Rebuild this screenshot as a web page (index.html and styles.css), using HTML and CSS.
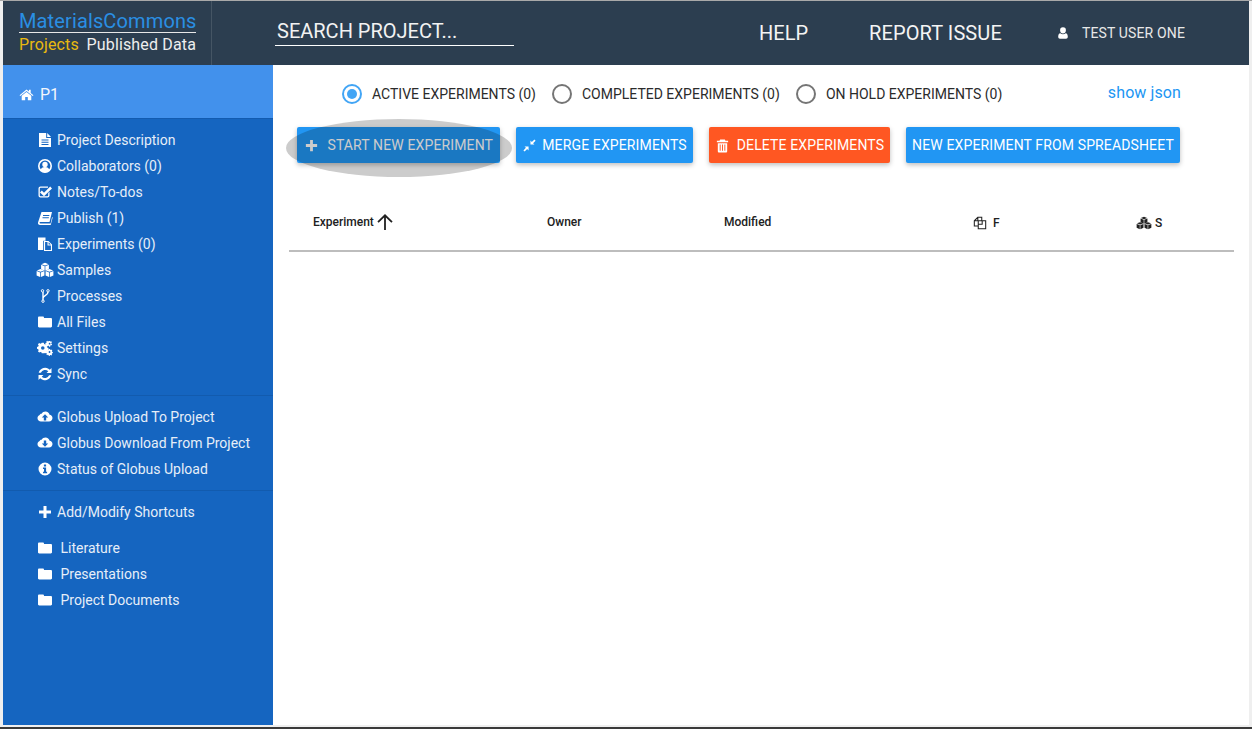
FILE: index.html
```html
<!DOCTYPE html>
<html lang="en">

<head>
  <meta charset="UTF-8">
  <title>Materials Commons</title>
  <link rel="stylesheet" href="styles.css">
</head>

<body>
  <svg class="defs" width="0" height="0">
    <symbol id="i-home" viewBox="0 0 16 16"><path d="M8 2.600 .6 8.700l.8 1L8 4.300l6.600 5.400.8-1-2.900-2.400V2.800h-1.900v1.900zM2.900 9.400V14h3.700v-3.300h2.800V14h3.700V9.400L8 5.200z"/></symbol>
    <symbol id="i-file" viewBox="0 0 16 16"><path fill-rule="evenodd" d="M2 1h7.200v5H14v9H2zM4.500 7.500v1h7v-1zM4.500 9.700v1h7v-1zM4.500 11.900v1h7v-1z"/><path d="M10.200 1 14 4.900h-3.800z"/></symbol>
    <symbol id="i-usercircle" viewBox="0 0 16 16"><path fill-rule="evenodd" d="M8 1a7 7 0 1 0 0 14A7 7 0 0 0 8 1zm0 1.600a5.400 5.400 0 1 1 0 10.800A5.400 5.400 0 0 1 8 2.600z"/><circle cx="8" cy="6.500" r="2.700"/><path d="M3.600 12c.5-2 2-3 4.400-3s3.900 1 4.400 3c-1 1.400-2.600 2.300-4.400 2.300S4.600 13.400 3.600 12z"/></symbol>
    <symbol id="i-check" viewBox="0 0 16 16"><path d="M3.500 2.500H11v1.300H3.500c-.4 0-.7.3-.7.7v7c0 .4.3.7.7.7h7c.4 0 .7-.3.7-.7V9l1.300-1.300v3.800c0 1.100-.9 2-2 2h-7c-1.100 0-2-.9-2-2v-7c0-1.100.9-2 2-2z"/><path d="M4.800 6.600 7 8.800 13.200 2.600 15 4.400 7 12.200 3 8.400z"/></symbol>
    <symbol id="i-book" viewBox="0 0 16 16"><path fill-rule="evenodd" d="M4.500 2H15l-2.500 10H3.300c-.5 0-.8.3-.8.700s.4.800.9.800h10.200l1.500-6.500.6.400L13.700 15H3c-1.400 0-2.300-1.200-2-2.500zM6 5v1h6.200l.3-1zM5.500 7.300v1h6.200l.3-1z"/></symbol>
    <symbol id="i-files" viewBox="0 0 16 16"><path d="M1 1.500h7.500v3.200H6.200V14H1z"/><path fill-rule="evenodd" d="M7 5h4.500L15 8.500V15H7zm1.100 1v8h5.800V9.500h-3.400V6zm3.500.3v2.200h2.200z"/></symbol>
    <symbol id="i-cubes" viewBox="0 0 18 16">
      <polygon points="9,.8 12.600,2.200 9,3.600 5.400,2.200"/><polygon points="5.100,2.800 8.650,4.200 8.650,8.800 5.100,7.200"/><polygon points="12.900,2.800 9.350,4.200 9.350,8.800 12.900,7.200"/>
      <polygon points="4.500,7 8.100,8.400 4.500,9.800 .9,8.400"/><polygon points=".6,9 4.150,10.400 4.150,15 .6,13.400"/><polygon points="8.400,9 4.850,10.400 4.850,15 8.400,13.400"/>
      <polygon points="13.500,7 17.100,8.400 13.500,9.800 9.900,8.400"/><polygon points="9.600,9 13.150,10.400 13.150,15 9.600,13.400"/><polygon points="17.400,9 13.850,10.400 13.850,15 17.400,13.400"/>
    </symbol>
    <symbol id="i-fork" viewBox="0 0 16 16"><path fill="none" stroke="currentColor" stroke-width="1.400" d="M6 4v8M11 4c0 3.600-5 3-5 6.500"/><circle cx="5.500" cy="2.800" r="1.200" fill="none" stroke="currentColor"/><circle cx="11" cy="2.800" r="1.200" fill="none" stroke="currentColor"/><circle cx="6" cy="13.200" r="1.200" fill="none" stroke="currentColor"/></symbol>
    <symbol id="i-folder" viewBox="0 0 16 16"><path d="M2.200 2.500h3.600c.7 0 1.200.5 1.200 1.200v.3h6.800c.7 0 1.200.5 1.200 1.200v7.100c0 .7-.5 1.200-1.200 1.200H2.200C1.500 13.500 1 13 1 12.300V3.700c0-.7.500-1.200 1.200-1.200z"/></symbol>
    <symbol id="i-cogs" viewBox="0 0 18 16"><path fill-rule="evenodd" d="M5.300 4h2.400l.3 1.500 1.200.6 1.300-.8 1.500 1.700-.9 1.200.3 1.300 1.500.4v2.100l-1.500.4-.3 1.200.9 1.200-1.500 1.500-1.300-.8-1.200.5L7.700 16H5.300L5 14.900l-1.200-.5-1.300.8L1 13.700l.9-1.200-.5-1.200L0 10.900V8.800l1.400-.4.500-1.300L1 5.900 2.500 4.400l1.300.8L5 4.700zM6.500 8a2 2 0 1 0 0 4 2 2 0 0 0 0-4z" transform="translate(0 -2)"/><path fill-rule="evenodd" d="M13.500 0h1.400l.2.900 1-.4.700 1.100-.7.700v1l.9.500-.5 1.200-1-.2-.7.700.1 1h-1.300l-.3-1-1-.1-.6.800-1.100-.7.400-.9-.5-.8-1-.1V2.400l1-.2.400-.8-.4-.9 1.100-.7.700.8zm.7 2.200a1 1 0 1 0 0 2 1 1 0 0 0 0-2z"/><path fill-rule="evenodd" d="M13.500 9h1.200l.2.900.9.300.7-.5.800 1-.6.700.2.900.9.300v1.200l-.9.200-.3.900.5.700-1 .7-.7-.5-.8.200-.3.900h-1l-.3-.9-.9-.3-.8.500-.7-1 .5-.7-.2-.9-.9-.2v-1.200l.9-.2.300-.9-.6-.7.800-.9.800.5.8-.3zm.6 2.500a1 1 0 1 0 0 2 1 1 0 0 0 0-2z"/></symbol>
    <symbol id="i-sync" viewBox="0 0 16 16"><path d="M14.500 2v5h-5l1.800-1.800A4.600 4.600 0 0 0 3.900 6.800H1.700A6.700 6.700 0 0 1 12.800 3.700z"/><path d="M1.500 14V9h5L4.700 10.800a4.600 4.600 0 0 0 7.400-1.600h2.200A6.700 6.700 0 0 1 3.200 12.300z"/></symbol>
    <symbol id="i-cloudup" viewBox="0 0 16 16"><path fill-rule="evenodd" d="M8.500 2.500c2 0 3.700 1.400 4.100 3.300 1.500.2 2.900 1.500 2.900 3.200 0 1.900-1.500 3.500-3.500 3.500H4c-2 0-3.500-1.500-3.500-3.300 0-1.400.9-2.600 2.200-3.100.1-.8 1-1.500 1.900-1.300.8-1.400 2.200-2.300 3.900-2.300zM8 5.200 4.800 8.400h2v3h2.400v-3h2z"/></symbol>
    <symbol id="i-clouddown" viewBox="0 0 16 16"><path fill-rule="evenodd" d="M8.500 2.500c2 0 3.700 1.400 4.100 3.300 1.500.2 2.900 1.500 2.900 3.200 0 1.900-1.500 3.500-3.500 3.500H4c-2 0-3.500-1.500-3.500-3.300 0-1.400.9-2.600 2.200-3.100.1-.8 1-1.500 1.900-1.300.8-1.400 2.200-2.300 3.900-2.300zM6.800 5.500v3h-2L8 11.700l3.200-3.200h-2v-3z"/></symbol>
    <symbol id="i-info" viewBox="0 0 16 16"><path fill-rule="evenodd" d="M8 1.500a6.500 6.500 0 1 0 0 13 6.500 6.500 0 0 0 0-13zM6.900 3.500h2.200v2H6.900zM6 6.500h3.100v4.300h1v1.400H6v-1.400h1V7.900H6z"/></symbol>
    <symbol id="i-plus" viewBox="0 0 16 16"><path d="M6.500 2h3v4.500H14v3H9.500V14h-3V9.500H2v-3h4.500z"/></symbol>
    <symbol id="i-compress" viewBox="0 0 16 16"><path d="M14.500 2.800 13.200 1.500 10.500 4.200 9 2.700V7h4.300l-1.500-1.500zM1.500 13.200l1.300 1.300 2.700-2.700L7 13.300V9H2.700l1.500 1.500z"/></symbol>
    <symbol id="i-trash" viewBox="0 0 16 16"><path fill-rule="evenodd" d="M5.500 1.500h5l.7 1.500H14v1.500H2V3h2.800zM3 5.500h10V14c0 .8-.6 1.500-1.300 1.500H4.300C3.600 15.500 3 14.800 3 14zM5 7v6.500h1V7zm2.500 0v6.500h1V7zM10 7v6.500h1V7z"/></symbol>
    <symbol id="i-user" viewBox="0 0 16 16"><path d="M8 1.500a3.300 3.300 0 0 1 3.300 3.500C11.300 7 9.800 8.500 8 8.500S4.700 7 4.700 5A3.300 3.300 0 0 1 8 1.500zM5 8.200C5.800 9 6.800 9.500 8 9.500s2.200-.5 3-1.300c1.700.2 2.500 1.700 2.500 4 0 1.400-.9 2.300-2 2.300h-7c-1.100 0-2-.9-2-2.300 0-2.300.8-3.800 2.500-4z"/></symbol>
    <symbol id="i-copy" viewBox="0 0 16 16"><path fill="none" stroke="currentColor" stroke-width="1.200" d="M6 11.500H1.500V5.500L5.500 1.500H10V5M5.500 1.500V5.500H1.500M6 5.500H14.500V14.500H6zM10.500 5.500V9.500H6"/></symbol>
  </svg>

  <div class="window">
    <header class="topbar">
      <div class="brand">
        <div class="brand-name">MaterialsCommons</div>
        <div class="brand-links">
          <span class="brand-active">Projects</span>
          <span>Published Data</span>
        </div>
      </div>
      <div class="search">SEARCH PROJECT...</div>
      <nav class="toplinks">
        <a class="toplink help">HELP</a>
        <a class="toplink report">REPORT ISSUE</a>
        <span class="user"><svg class="user-icon"><use href="#i-user"/></svg>TEST USER ONE</span>
      </nav>
    </header>

    <div class="content">
      <aside class="sidebar">
        <div class="project"><svg class="project-icon"><use href="#i-home"/></svg>P1</div>

        <ul class="nav nav-main">
          <li><svg><use href="#i-file"/></svg>Project Description</li>
          <li><svg><use href="#i-usercircle"/></svg>Collaborators (0)</li>
          <li><svg><use href="#i-check"/></svg>Notes/To-dos</li>
          <li><svg><use href="#i-book"/></svg>Publish (1)</li>
          <li><svg><use href="#i-files"/></svg>Experiments (0)</li>
          <li><svg class="wide"><use href="#i-cubes"/></svg>Samples</li>
          <li><svg><use href="#i-fork"/></svg>Processes</li>
          <li><svg><use href="#i-folder"/></svg>All Files</li>
          <li><svg><use href="#i-cogs"/></svg>Settings</li>
          <li><svg><use href="#i-sync"/></svg>Sync</li>
        </ul>

        <ul class="nav nav-globus">
          <li><svg><use href="#i-cloudup"/></svg>Globus Upload To Project</li>
          <li><svg><use href="#i-clouddown"/></svg>Globus Download From Project</li>
          <li><svg><use href="#i-info"/></svg>Status of Globus Upload</li>
        </ul>

        <ul class="nav nav-shortcuts">
          <li class="add"><svg><use href="#i-plus"/></svg>Add/Modify Shortcuts</li>
          <li class="shortcut"><svg><use href="#i-folder"/></svg>Literature</li>
          <li class="shortcut"><svg><use href="#i-folder"/></svg>Presentations</li>
          <li class="shortcut"><svg><use href="#i-folder"/></svg>Project Documents</li>
        </ul>
      </aside>

      <main class="main">
        <div class="filters">
          <label class="radio radio-on"><span class="circle"></span>ACTIVE EXPERIMENTS (0)</label>
          <label class="radio"><span class="circle"></span>COMPLETED EXPERIMENTS (0)</label>
          <label class="radio"><span class="circle"></span>ON HOLD EXPERIMENTS (0)</label>
          <a class="show-json">show json</a>
        </div>

        <div class="actions">
          <button class="btn btn-start" type="button"><svg><use href="#i-plus"/></svg>START NEW EXPERIMENT<span class="ripple"></span></button>
          <button class="btn btn-merge" type="button"><svg><use href="#i-compress"/></svg>MERGE EXPERIMENTS</button>
          <button class="btn btn-delete" type="button"><svg><use href="#i-trash"/></svg>DELETE EXPERIMENTS</button>
          <button class="btn btn-sheet" type="button">NEW EXPERIMENT FROM SPREADSHEET</button>
        </div>

        <div class="table-head">
          <div class="col">Experiment
            <svg class="sort" viewBox="0 0 16 16"><path fill="none" stroke="currentColor" stroke-width="1.600" d="M8 15V2M1.800 8.200 8 2l6.200 6.200"/></svg>
          </div>
          <div class="col">Owner</div>
          <div class="col">Modified</div>
          <div class="col col-icon"><svg class="copy"><use href="#i-copy"/></svg>F</div>
          <div class="col col-icon"><svg class="cubes"><use href="#i-cubes"/></svg>S</div>
        </div>
      </main>
    </div>
  </div>
  <div class="bottom-edge"></div>
</body>

</html>
```

FILE: styles.css
```css
* {
  box-sizing: border-box;
}

html,
body {
  margin: 0;
  height: 729px;
  overflow: hidden;
}

body {
  background-color: #efefef;
  font-family: Roboto, "Liberation Sans", sans-serif;
  border-top: 1px solid #a9a9a9;
}

.defs {
  display: block;
  height: 0;
}

.window {
  margin: 0 3px;
  height: 724px;
  display: flex;
  flex-direction: column;
}

.bottom-edge {
  margin-top: 2px;
  height: 2px;
  background-color: #3a3a3a;
}

/* top bar */
.topbar {
  display: flex;
  height: 64px;
  background-color: #2c3e50;
  color: #fff;
}

.brand {
  width: 209px;
  padding: 9px 0 0 16px;
  border-right: 1px solid #455564;
}

.brand-name {
  width: 177px;
  height: 23px;
  border-bottom: 1px solid #e8e8e8;
  color: #2a8fe3;
  font-size: 20px;
  line-height: 23px;
  letter-spacing: .13px;
  white-space: nowrap;
}

.brand-links {
  display: flex;
  justify-content: space-between;
  width: 177px;
  margin-top: 2px;
  font-size: 16px;
  line-height: 20px;
  letter-spacing: .15px;
  color: #eee;
}

.brand-active {
  color: #e9b90f;
}

.search {
  width: 239px;
  height: 45px;
  margin-left: 63px;
  padding: 18px 0 0 2px;
  border-bottom: 1px solid #fff;
  font-size: 20px;
  line-height: 24px;
  color: #f2f2f2;
}

.toplinks {
  display: flex;
  align-items: center;
  flex: 1;
  padding-left: 245px;
}

.toplink {
  font-size: 20px;
  color: #f4f4f4;
}

.report {
  margin-left: 61px;
  letter-spacing: .1px;
}

.user {
  display: flex;
  align-items: center;
  margin-left: 54px;
  font-size: 14px;
  letter-spacing: .15px;
  color: #e8e8e8;
}

.user-icon {
  width: 14px;
  height: 14px;
  margin-right: 12px;
  fill: #fff;
}

/* sidebar */
.content {
  display: flex;
  flex: 1;
  min-height: 0;
}

.sidebar {
  width: 270px;
  background-color: #1565c0;
  color: #e6eef8;
  font-size: 14px;
}

.project {
  display: flex;
  align-items: center;
  height: 54px;
  padding: 5px 0 0 16px;
  background-color: #4291ec;
  border-bottom: 1px solid #125bb0;
  color: #f2f6fc;
  font-size: 16px;
}

.project-icon {
  width: 15px;
  height: 15px;
  margin-right: 6px;
  fill: #fff;
}

.nav {
  list-style: none;
  margin: 0;
  padding: 0;
}

.nav li {
  display: flex;
  align-items: center;
  height: 26px;
  padding-left: 34px;
}

.nav svg {
  width: 16px;
  height: 16px;
  margin-right: 4px;
  fill: #fff;
  color: #fff;
  flex: none;
}

.nav svg.wide {
  width: 18px;
  margin-left: -1px;
  margin-right: 3px;
}

.nav-main {
  padding: 8px 0 8px;
  border-bottom: 1px solid #125bae;
}

.nav-globus {
  padding: 8px 0 8px;
  border-bottom: 1px solid #125bae;
}

.nav-shortcuts {
  padding-top: 8px;
}

.nav li.add {
  margin-bottom: 10px;
}

.nav li.shortcut svg {
  margin-right: 7.500px;
}

/* main area */
.main {
  flex: 1;
  padding: 0 15px 0 16px;
  background-color: #fff;
}

.filters {
  display: flex;
  align-items: center;
  height: 58px;
  padding: 0 53px 0 53px;
  font-size: 14px;
  color: #2b2b2b;
}

.radio {
  display: flex;
  align-items: center;
  margin-right: 16px;
}

.circle {
  position: relative;
  width: 20px;
  height: 20px;
  margin-right: 10px;
  border: 2px solid #757575;
  border-radius: 50%;
}

.radio-on .circle {
  border-color: #42a5f5;
}

.radio-on .circle::after {
  content: "";
  position: absolute;
  top: 3px;
  left: 3px;
  width: 10px;
  height: 10px;
  border-radius: 50%;
  background-color: #42a5f5;
}

.show-json {
  margin-left: auto;
  margin-top: -4px;
  font-size: 16px;
  letter-spacing: .1px;
  color: #2196f3;
}

.actions {
  display: flex;
  gap: 16px;
  margin-top: 4px;
  padding-left: 8px;
}

.btn {
  position: relative;
  display: flex;
  align-items: center;
  justify-content: center;
  height: 36px;
  padding: 0;
  border: 0;
  border-radius: 2px;
  background-color: #2196f3;
  color: #fff;
  font-family: inherit;
  font-size: 14px;
  letter-spacing: .13px;
  white-space: nowrap;
  box-shadow: 0 2px 5px rgba(0, 0, 0, .26);
}

.btn svg {
  width: 15px;
  height: 15px;
  flex: none;
  fill: currentColor;
}

.btn-start {
  width: 203px;
}

.btn-start svg {
  margin-right: 8.500px;
}

.btn-merge {
  width: 177px;
}

.btn-merge svg {
  margin-right: 5px;
}

.btn-delete {
  width: 181px;
  background-color: #ff5722;
}

.btn-delete svg {
  margin-right: 7px;
}

.btn-sheet {
  width: 274px;
}

.ripple {
  position: absolute;
  left: -11px;
  top: -8px;
  width: 226px;
  height: 58px;
  border-radius: 50%;
  background-color: rgba(0, 0, 0, .2);
}

/* experiments table */
.table-head {
  display: grid;
  grid-template-columns: 234px 177px 249px 163px 1fr;
  align-items: center;
  height: 54px;
  margin-top: 35px;
  padding: 0 0 5px 24px;
  border-bottom: 2px solid #bdbdbd;
  font-size: 12px;
  font-weight: 500;
  color: #212121;
}

.col {
  display: flex;
  align-items: center;
}

.sort {
  width: 18px;
  height: 18px;
  margin-left: 2px;
}

.col-icon {
  padding-top: 2px;
}

.col-icon svg {
  height: 14px;
  fill: #212121;
  color: #212121;
}

.copy {
  width: 14px;
  margin-right: 6px;
}

.cubes {
  width: 16px;
  margin-right: 3px;
}
```
